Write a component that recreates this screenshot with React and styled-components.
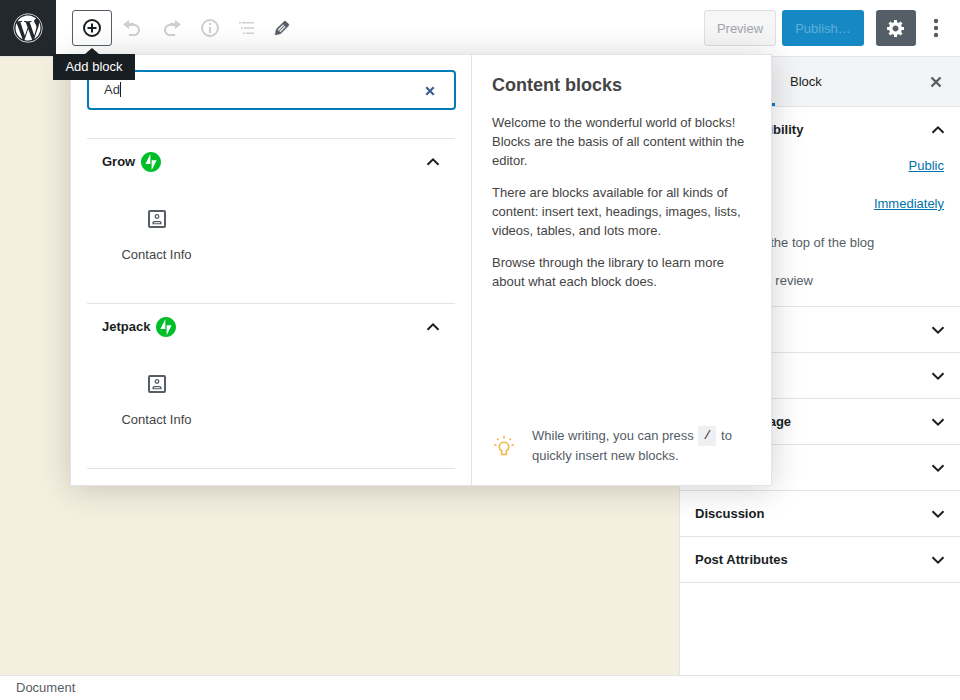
import React from 'react';
import styled, { createGlobalStyle } from 'styled-components';
import { FaWordpress } from 'react-icons/fa';

const Global = createGlobalStyle`
  html, body { margin: 0; padding: 0; height: 700px; overflow: hidden; background: #fff; }
  body { font-family: "Liberation Sans", Arial, sans-serif; font-size: 13px; color: #191e23; }
  p { margin: 0; }
`;

const Page = styled.div`
  position: relative;
  width: 960px;
  height: 700px;
  display: flex;
  flex-direction: column;
  overflow: hidden;
`;

const Header = styled.header`
  height: 56px;
  flex: none;
  display: flex;
  align-items: flex-start;
  background: #fff;
  border-bottom: 1px solid #e2e4e7;
  box-sizing: content-box;
`;

const Logo = styled.div`
  width: 56px;
  height: 56px;
  background: #23282d;
  color: #fff;
  display: flex;
  align-items: center;
  justify-content: center;
`;

const Tools = styled.div`
  display: flex;
  align-items: center;
  margin: 10px 0 0 16px;
`;

const AddButton = styled.div`
  width: 40px;
  height: 36px;
  box-sizing: border-box;
  border: 1px solid #555d66;
  border-radius: 3px;
  display: flex;
  align-items: center;
  justify-content: center;
  color: #191e23;
`;

const ToolIcon = styled.div`
  width: ${p => p.$w}px;
  height: 36px;
  display: flex;
  align-items: center;
  justify-content: center;
  color: ${p => (p.$off ? '#ccd0d4' : '#555d66')};
`;

const Actions = styled.div`
  margin: 10px 4px 0 auto;
  display: flex;
  align-items: center;
`;

const Preview = styled.div`
  width: 72px;
  height: 36px;
  box-sizing: border-box;
  border: 1px solid #dcdee1;
  border-radius: 3px;
  background: #f6f6f6;
  color: #a0a5aa;
  display: flex;
  align-items: center;
  justify-content: center;
`;

const Publish = styled.div`
  width: 82px;
  height: 36px;
  margin-left: 6px;
  border-radius: 3px;
  background: #1689c5;
  color: #5fafd9;
  display: flex;
  align-items: center;
  justify-content: center;
`;

const Gear = styled.div`
  width: 40px;
  height: 36px;
  margin-left: 12px;
  border-radius: 3px;
  background: #555d66;
  color: #fff;
  display: flex;
  align-items: center;
  justify-content: center;
`;

const More = styled.div`
  width: 40px;
  height: 36px;
  display: flex;
  align-items: center;
  justify-content: center;
  color: #555d66;
`;

const Body = styled.div`
  flex: 1;
  display: flex;
  min-height: 0;
`;

const Canvas = styled.main`
  flex: 1;
  background: #f5efdf;
`;

const Sidebar = styled.aside`
  width: 281px;
  box-sizing: border-box;
  border-left: 1px solid #e2e4e7;
  background: #fff;
`;

const Tabs = styled.div`
  height: 50px;
  box-sizing: border-box;
  background: #f3f4f5;
  border-bottom: 1px solid #e2e4e7;
  display: flex;
  align-items: stretch;
`;

const Tab = styled.div`
  width: ${p => p.$w}px;
  display: flex;
  align-items: center;
  padding-left: 15px;
  box-sizing: border-box;
  ${p => p.$active && 'box-shadow: inset 0 -3px 0 #007cba;'}
`;

const CloseBox = styled.div`
  margin-left: auto;
  width: 48px;
  display: flex;
  align-items: center;
  justify-content: center;
  color: #555d66;
`;

const Panel = styled.section`
  height: ${p => p.$h || 46}px;
  box-sizing: border-box;
  border-bottom: 1px solid #e2e4e7;
`;

const PanelHead = styled.div`
  height: 45px;
  display: flex;
  align-items: center;
  justify-content: space-between;
  padding: 0 15px;
  font-weight: 700;
  color: #191e23;
`;

const PanelRow = styled.div`
  height: 38.5px;
  margin-top: ${p => p.$mt || 0}px;
  padding: 0 16px 0 15px;
  display: flex;
  align-items: center;
  justify-content: space-between;
  color: #555d66;
`;

const Link = styled.a`
  color: #0073aa;
  text-decoration: underline;
`;

const CheckLabel = styled.span`
  margin-left: 29px;
`;

const Footer = styled.footer`
  height: 25px;
  flex: none;
  box-sizing: border-box;
  border-top: 1px solid #e2e4e7;
  background: #fff;
  padding: 0 0 2px 16px;
  display: flex;
  align-items: center;
  color: #555d66;
`;

const Tooltip = styled.div`
  position: absolute;
  left: 53px;
  top: 54px;
  height: 26px;
  width: 82px;
  box-sizing: border-box;
  padding-bottom: 2px;
  background: #191e23;
  color: #fff;
  display: flex;
  align-items: center;
  justify-content: center;
  z-index: 5;
  &::before {
    content: '';
    position: absolute;
    left: 32px;
    top: -6px;
    border: 7px solid transparent;
    border-top: 0;
    border-bottom: 6px solid #191e23;
  }
`;

const Inserter = styled.div`
  position: absolute;
  left: 70px;
  top: 54px;
  width: 702px;
  height: 432px;
  box-sizing: border-box;
  background: #fff;
  border: 1px solid #e2e4e7;
  box-shadow: 0 3px 30px rgba(25, 30, 35, 0.2);
  display: flex;
  z-index: 4;
`;

const LeftPane = styled.div`
  width: 401px;
  flex: none;
  box-sizing: border-box;
  border-right: 1px solid #e2e4e7;
  padding: 15px 15px 0 16px;
  overflow: hidden;
`;

const SearchBox = styled.div`
  height: 40px;
  box-sizing: border-box;
  border: 2px solid #007cba;
  border-radius: 4px;
  display: flex;
  align-items: center;
  padding: 0 19px 0 15px;
  color: #32373c;
  margin-bottom: 28px;
`;

const Caret = styled.span`
  display: inline-block;
  width: 1px;
  height: 15px;
  background: #191e23;
  margin-top: 1px;
`;

const SearchTyped = styled.span`
  display: flex;
  align-items: center;
  margin-top: -2px;
`;

const Clear = styled.span`
  margin-left: auto;
  margin-top: 2px;
  display: flex;
  color: #3f5c94;
`;

const Category = styled.div`
  height: 165px;
  width: 368px;
  box-sizing: border-box;
  border-top: 1px solid #e2e4e7;
`;

const CategoryHead = styled.div`
  height: 45px;
  display: flex;
  align-items: center;
  padding: 0 15px;
  font-weight: 700;
  color: #191e23;
`;

const Badge = styled.svg`
  margin-left: 6px;
  flex: none;
`;

const Chevron = styled.span`
  margin-left: auto;
  display: flex;
`;

const BlockItem = styled.div`
  width: 139px;
  margin-top: 26px;
  display: flex;
  flex-direction: column;
  align-items: center;
  color: #555d66;
`;

const BlockLabel = styled.span`
  margin-top: 19px;
  color: #444;
`;

const Help = styled.div`
  flex: 1;
  box-sizing: border-box;
  padding: 19px 20px 0;
  display: flex;
  flex-direction: column;
  color: #444;
`;

const HelpTitle = styled.h2`
  margin: 0 0 17px;
  font-size: 18px;
  line-height: 22px;
  font-weight: 700;
  color: #444;
`;

const HelpText = styled.p`
  line-height: 19px;
  margin-bottom: 13px;
`;

const Tip = styled.div`
  margin-top: auto;
  margin-bottom: 19px;
  display: flex;
  align-items: center;
  color: #555d66;
`;

const TipIcon = styled.div`
  width: 40px;
  flex: none;
  display: flex;
  margin-top: -2px;
  color: #f0b849;
`;

const TipText = styled.p`
  line-height: 20px;
`;

const Kbd = styled.span`
  display: inline-block;
  vertical-align: top;
  width: 18px;
  height: 20px;
  margin: 0 1px;
  line-height: 20px;
  text-align: center;
  background: #edeff0;
  font-family: "Liberation Mono", monospace;
  font-size: 13px;
  color: #32373c;
`;

const Up = ({ color = '#191e23' }) => (
  <svg width="14" height="10" viewBox="0 0 14 10"><path d="M1.5 7.8 7 2.4l5.5 5.4" fill="none" stroke={color} strokeWidth="2" /></svg>
);
const Down = ({ color = '#191e23' }) => (
  <svg width="14" height="10" viewBox="0 0 14 10"><path d="M1.5 2.2 7 7.6l5.5-5.4" fill="none" stroke={color} strokeWidth="2" /></svg>
);

const PlusCircle = () => (
  <svg width="20" height="20" viewBox="0 0 20 20">
    <circle cx="10" cy="10" r="8" fill="none" stroke="currentColor" strokeWidth="2" />
    <path d="M10 5.5v9M5.5 10h9" stroke="currentColor" strokeWidth="2" />
  </svg>
);
const Undo = () => (
  <svg width="20" height="20" viewBox="0 0 20 20" fill="currentColor"><path d="M12 5H7V2L1 6.5 7 11V8h5c2.2 0 4 1.8 4 4s-1.8 4-4 4H7v2h5c3.3 0 6-2.7 6-6s-2.7-6-6-6z" /></svg>
);
const Redo = () => (
  <svg width="20" height="20" viewBox="0 0 20 20" fill="currentColor"><path d="M8 5h5V2l6 4.5-6 4.5V8H8c-2.2 0-4 1.8-4 4s1.8 4 4 4h5v2H8c-3.3 0-6-2.7-6-6s2.7-6 6-6z" /></svg>
);
const Info = () => (
  <svg width="20" height="20" viewBox="0 0 20 20">
    <circle cx="10" cy="10" r="8" fill="none" stroke="currentColor" strokeWidth="2" />
    <path d="M9 9h2v6H9zM9 5h2v2H9z" fill="currentColor" />
  </svg>
);
const Outline = () => (
  <svg width="20" height="20" viewBox="0 0 20 20" fill="currentColor">
    <path d="M3 4h2v1.5H3zM6 4h12v1.5H6zM5 9.2h2v1.5H5zM8 9.2h10v1.5H8zM7 14.5h2V16H7zM10 14.5h8V16h-8z" />
  </svg>
);
const Pencil = () => (
  <svg width="20" height="20" viewBox="0 0 20 20" fill="currentColor" stroke="currentColor" strokeWidth="0.4">
    <path d="M13.89 3.39l2.71 2.72c.46.46.42 1.24.03 1.64l-8.01 8.02-5.56 1.16 1.16-5.58s7.6-7.63 7.99-8.03c.39-.39 1.22-.39 1.68.07zm-2.73 2.79l-5.59 5.61 1.11 1.11 5.54-5.65zm-2.97 8.23l5.58-5.6-1.07-1.08-5.59 5.6z" />
  </svg>
);
const Cog = () => (
  <svg width="20" height="20" viewBox="0 0 20 20" fill="currentColor">
    <path d="M18 12h-2.18c-.17.7-.44 1.35-.81 1.93l1.54 1.54-2.1 2.1-1.54-1.54c-.58.36-1.23.63-1.91.79V19H8v-2.18c-.68-.16-1.33-.43-1.91-.79l-1.54 1.54-2.12-2.12 1.54-1.54c-.36-.58-.63-1.23-.79-1.91H1V9.03h2.17c.16-.7.44-1.35.8-1.94L2.43 5.55l2.1-2.1 1.54 1.54c.58-.37 1.24-.64 1.93-.81V2h3v2.18c.68.16 1.33.43 1.91.79l1.54-1.54 2.12 2.12-1.54 1.54c.36.59.64 1.24.8 1.94H18V12zm-8.5 1.5c1.66 0 3-1.34 3-3s-1.34-3-3-3-3 1.34-3 3 1.34 3 3 3z" />
  </svg>
);
const Dots = () => (
  <svg width="6" height="20" viewBox="0 0 6 20" fill="currentColor">
    <circle cx="3" cy="3" r="2.2" /><circle cx="3" cy="10" r="2.2" /><circle cx="3" cy="17" r="2.2" />
  </svg>
);
const Close = ({ size = 12, w = 2.4 }) => (
  <svg width={size} height={size} viewBox="0 0 12 12"><path d="M1.5 1.5l9 9M10.5 1.5l-9 9" stroke="currentColor" strokeWidth={w} /></svg>
);
const Bolt = () => (
  <Badge width="20" height="20" viewBox="0 0 32 32">
    <path fill="#00be28" d="M16 0C7.2 0 0 7.2 0 16s7.2 16 16 16 16-7.2 16-16S24.8 0 16 0zM15 19H7l8-16v16zm2 10V13h8l-8 16z" />
  </Badge>
);
const Contact = () => (
  <svg width="18" height="18" viewBox="0 0 18 18">
    <rect x="1" y="1" width="16" height="16" rx="1" fill="none" stroke="currentColor" strokeWidth="2" />
    <circle cx="9" cy="6.5" r="1.8" fill="none" stroke="currentColor" strokeWidth="1.3" />
    <path d="M4.5 14.2v-1.6c0-1 .9-1.7 2-1.7h5c1.1 0 2 .7 2 1.7v1.6z" fill="currentColor" />
    <path d="M6 13.2h6v-.7c0-.2-.2-.3-.5-.3h-5c-.3 0-.5.1-.5.3z" fill="#fff" />
  </svg>
);
const Bulb = () => (
  <svg width="24" height="24" viewBox="0 0 24 24" fill="none" stroke="currentColor">
    <path d="M9.6 21.5v-3.7C8 16.9 7.2 15.5 7.2 14a4.8 4.8 0 0 1 9.6 0c0 1.5-.8 2.9-2.4 3.8v3.7z" strokeWidth="1.6" />
    <path d="M12 3v2.6M5.2 5.6l1.4 1.4M18.8 5.6l-1.4 1.4M2 12h2.4M19.6 12H22" strokeWidth="1.6" />
  </svg>
);

const Cat = ({ name }) => (
  <Category>
    <CategoryHead>
      {name}
      <Bolt />
      <Chevron><Up /></Chevron>
    </CategoryHead>
    <BlockItem>
      <Contact />
      <BlockLabel>Contact Info</BlockLabel>
    </BlockItem>
  </Category>
);

const Row = ({ name }) => (
  <Panel>
    <PanelHead>{name}<Down /></PanelHead>
  </Panel>
);

export default function App() {
  return (
    <Page>
      <Global />
      <Header>
        <Logo><FaWordpress size={30} /></Logo>
        <Tools>
          <AddButton><PlusCircle /></AddButton>
          <ToolIcon $w={40} $off><Undo /></ToolIcon>
          <ToolIcon $w={40} $off><Redo /></ToolIcon>
          <ToolIcon $w={36} $off><Info /></ToolIcon>
          <ToolIcon $w={36} $off><Outline /></ToolIcon>
          <ToolIcon $w={36}><Pencil /></ToolIcon>
        </Tools>
        <Actions>
          <Preview>Preview</Preview>
          <Publish>Publish…</Publish>
          <Gear><Cog /></Gear>
          <More><Dots /></More>
        </Actions>
      </Header>
      <Body>
        <Canvas />
        <Sidebar>
          <Tabs>
            <Tab $w={95} $active>Document</Tab>
            <Tab $w={90}>Block</Tab>
            <CloseBox><Close /></CloseBox>
          </Tabs>
          <Panel $h={200}>
            <PanelHead>Status &amp; visibility<Up /></PanelHead>
            <PanelRow $mt={-6}>Visibility<Link>Public</Link></PanelRow>
            <PanelRow>Publish<Link>Immediately</Link></PanelRow>
            <PanelRow><CheckLabel>Stick to the top of the blog</CheckLabel></PanelRow>
            <PanelRow><CheckLabel>Pending review</CheckLabel></PanelRow>
          </Panel>
          <Row name="Revisions" />
          <Row name="Permalink" />
          <Row name="Featured image" />
          <Row name="Excerpt" />
          <Row name="Discussion" />
          <Row name="Post Attributes" />
        </Sidebar>
      </Body>
      <Footer>Document</Footer>
      <Tooltip>Add block</Tooltip>
      <Inserter>
        <LeftPane>
          <SearchBox>
            <SearchTyped>Ad<Caret /></SearchTyped>
            <Clear><Close size={10} w={2.6} /></Clear>
          </SearchBox>
          <Cat name="Grow" />
          <Cat name="Jetpack" />
          <Category />
        </LeftPane>
        <Help>
          <HelpTitle>Content blocks</HelpTitle>
          <HelpText>Welcome to the wonderful world of blocks! Blocks are the basis of all content within the editor.</HelpText>
          <HelpText>There are blocks available for all kinds of content: insert text, headings, images, lists, videos, tables, and lots more.</HelpText>
          <HelpText>Browse through the library to learn more about what each block does.</HelpText>
          <Tip>
            <TipIcon><Bulb /></TipIcon>
            <TipText>While writing, you can press <Kbd>/</Kbd> to quickly insert new blocks.</TipText>
          </Tip>
        </Help>
      </Inserter>
    </Page>
  );
}
